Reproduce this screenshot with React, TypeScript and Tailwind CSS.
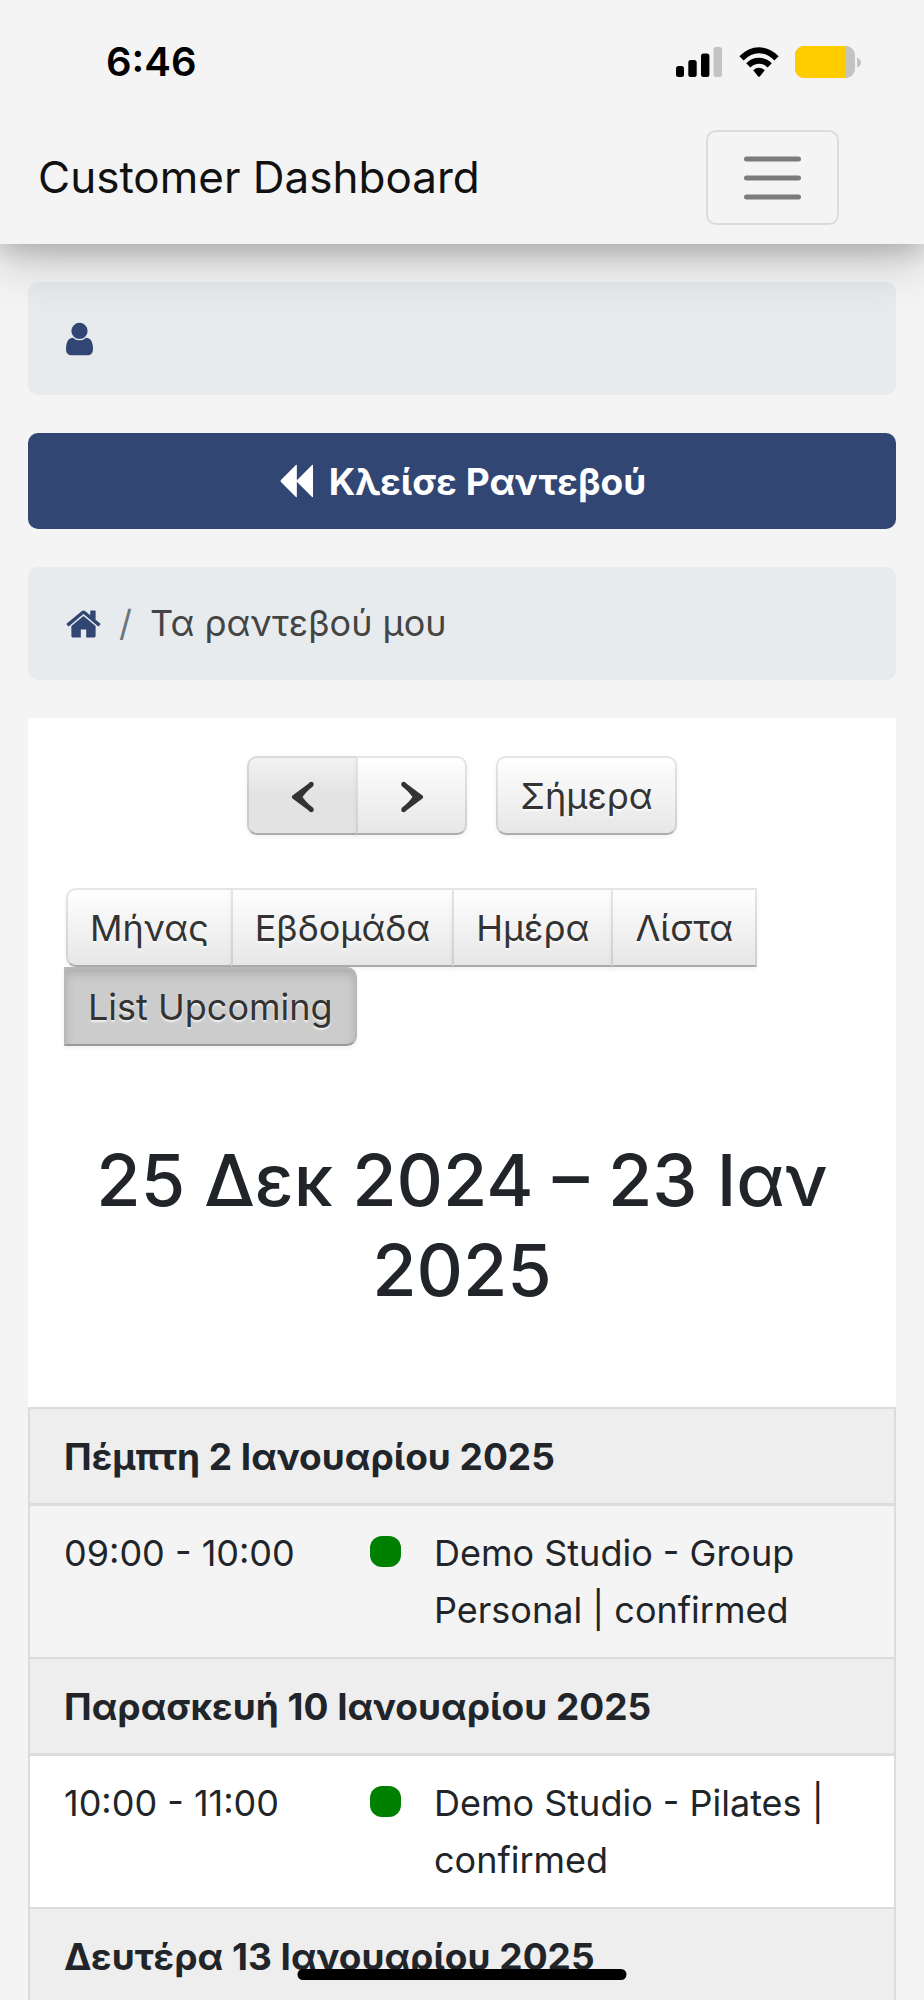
import { useState } from "react";
import clsx from "clsx";

type Appointment = { time: string; title: string };
type Day = { label: string; highlighted?: boolean; items: Appointment[] };

const VIEWS = ["Μήνας", "Εβδομάδα", "Ημέρα", "Λίστα", "List Upcoming"];

const DAYS: Day[] = [
  {
    label: "Πέμπτη 2 Ιανουαρίου 2025",
    highlighted: true,
    items: [{ time: "09:00 - 10:00", title: "Demo Studio - Group Personal | confirmed" }],
  },
  {
    label: "Παρασκευή 10 Ιανουαρίου 2025",
    items: [{ time: "10:00 - 11:00", title: "Demo Studio - Pilates | confirmed" }],
  },
  { label: "Δευτέρα 13 Ιανουαρίου 2025", items: [] },
];

const BUTTON =
  "h-[79px] border-2 border-black/10 border-b-black/25 px-[22px] pt-[2px] text-[#333] [text-shadow:0_2px_2px_rgba(255,255,255,0.75)]";
const RAISED = "bg-linear-to-b from-white to-[#e6e6e6] bg-origin-border shadow-[0_2px_5px_rgba(0,0,0,0.06)]";
const HOVERED = "bg-linear-to-b from-[#f3f3f3] to-[#e3e3e3] to-50% bg-origin-border shadow-[0_2px_5px_rgba(0,0,0,0.06)]";
const PRESSED = "bg-[#ccc] shadow-[inset_0_5px_10px_rgba(0,0,0,0.15),0_2px_5px_rgba(0,0,0,0.06)]";

function UserIcon() {
  return (
    <svg viewBox="256 0 1280 1792" className="h-[38px] w-[27px]" fill="currentColor" aria-hidden="true">
      <path d="M1536 1399q0 109-62.5 187t-150.5 78h-854q-88 0-150.5-78t-62.5-187q0-85 8.5-160.5t31.5-152 58.5-131 94-89 134.5-34.5q131 128 313 128t313-128q76 0 134.5 34.5t94 89 58.5 131 31.5 152 8.5 160.5zm-256-887q0 159-112.5 271.5t-271.5 112.5-271.5-112.5-112.5-271.5 112.5-271.5 271.5-112.5 271.5 112.5 112.5 271.5z" />
    </svg>
  );
}

function HomeIcon() {
  return (
    <svg viewBox="64 0 1664 1792" className="h-[38px] w-[35px]" fill="currentColor" aria-hidden="true">
      <path d="M1472 992v480q0 26-19 45t-45 19h-384v-384h-256v384h-384q-26 0-45-19t-19-45v-480q0-1 .5-3t.5-3l575-474 575 474q1 2 1 6zm223-69l-62 74q-8 9-21 11h-3q-13 0-21-7l-692-577-692 577q-12 8-24 7-13-2-21-11l-62-74q-8-10-7-23.5t11-21.5l719-599q32-26 76-26t76 26l244 204v-195q0-14 9-23t23-9h192q14 0 23 9t9 23v408l219 182q10 8 11 21.5t-7 23.5z" />
    </svg>
  );
}

function BackwardIcon() {
  return (
    <svg viewBox="64 0 1664 1792" className="h-[38px] w-[35px]" fill="currentColor" aria-hidden="true">
      <path d="M1683 141q19-19 32-13t13 32v1472q0 26-13 32t-32-13l-710-710q-9-9-13-19v710q0 26-13 32t-32-13l-710-710q-19-19-19-45t19-45l710-710q19-19 32-13t13 32v710q4-10 13-19z" />
    </svg>
  );
}

function Chevron({ flipped = false }: { flipped?: boolean }) {
  return (
    <svg viewBox="0 0 24 32" className={clsx("h-8 w-6", flipped && "-scale-x-100")} aria-hidden="true">
      <path
        d="M20.300 .8C22.800 .8 23.500 3.800 21.800 5.500C18 8.500 14.500 11.500 11.500 16C14.500 20.500 18 23.500 21.800 26.500C23.500 28.200 22.800 31.200 20.300 31.200C19 31.200 18 30 17 29L1.200 17.200Q.5 16 1.200 14.800L17 3C18 2 19 .8 20.300 .8Z"
        fill="#333"
      />
    </svg>
  );
}

function StatusBar() {
  return (
    <div className="flex h-[111px] items-center justify-between pt-3 pr-[63px] pl-[106px] text-black">
      <span className="text-[40px] leading-none font-semibold">6:46</span>
      <div className="flex items-center">
        <svg viewBox="0 0 46 30" className="h-[30px] w-[46px]" aria-hidden="true">
          <rect x="0" y="19" width="8" height="11" rx="2.500" />
          <rect x="12.300" y="13" width="8.400" height="17" rx="2.500" />
          <rect x="25" y="6.500" width="8.400" height="23.500" rx="2.500" />
          <rect x="37.500" y="0" width="8.500" height="30" rx="2.500" fill="#c3c3c3" />
        </svg>
        <svg viewBox="0 0 40 30" className="ml-[17px] h-[30px] w-10" aria-hidden="true">
          <g fill="none" stroke="#000" strokeWidth="6">
            <path d="M2.500 11.300Q10.500 3.200 20 3.200T37.500 11.300" />
            <path d="M9.300 18.300Q14 13.700 20 13.700T30.700 18.300" />
          </g>
          <path d="M14.200 23.200Q20 18.500 25.800 23.200L21 29.200Q20 30.300 19 29.200Z" />
        </svg>
        <svg viewBox="0 0 66 32" className="ml-4 h-8 w-[66px]" aria-hidden="true">
          <rect width="60" height="32" rx="9" fill="#c3c3c3" />
          <path d="M9 0H50.500V32H9A9 9 0 0 1 0 23V9A9 9 0 0 1 9 0Z" fill="#fc0" />
          <path d="M62 11.500Q66 13 66 16.500T62 21.500Z" fill="#c3c3c3" />
        </svg>
      </div>
    </div>
  );
}

export default function App() {
  const [view, setView] = useState("List Upcoming");

  return (
    <div className="h-screen overflow-hidden bg-[#f4f4f4] font-[Inter,'Noto_Sans',sans-serif] text-[36px] leading-[57px] text-[#212529]">
      <header className="relative z-10 bg-[#f4f4f4] shadow-[0_9px_19px_rgba(0,0,0,0.14),0_19px_48px_rgba(0,0,0,0.19)]">
        <StatusBar />
        <nav className="flex items-center justify-between py-[19px] pr-[85px] pl-[38px]">
          <a href="#" className="text-[44px] text-[#111]">
            Customer Dashboard
          </a>
          <button
            type="button"
            aria-label="Toggle navigation"
            className="flex h-[95px] w-[133px] items-center justify-center rounded-[10px] border-2 border-black/10"
          >
            <svg viewBox="0 0 57 44" className="h-11 w-[57px]" stroke="#7b7b7b" strokeWidth="5" strokeLinecap="round" aria-hidden="true">
              <path d="M2.500 3H54.500M2.500 22H54.500M2.500 41H54.500" />
            </svg>
          </button>
        </nav>
      </header>

      <main className="flex flex-col gap-[38px] px-7 pt-[38px]">
        <div className="flex h-[113px] items-center rounded-[10px] bg-[#e7ebee] px-[38px]">
          <a href="#" aria-label="Account" className="text-[#314673]">
            <UserIcon />
          </a>
        </div>

        <a
          href="#"
          className="flex h-[96px] items-center justify-center gap-4 rounded-[10px] bg-[#314673] text-[37px] font-bold text-white"
        >
          <BackwardIcon />
          Κλείσε Ραντεβού
        </a>

        <nav aria-label="breadcrumb" className="h-[113px] rounded-[10px] bg-[#e7ebee] px-[38px] py-7">
          <ol className="flex items-center">
            <li>
              <a href="#" aria-label="Home" className="text-[#314673]">
                <HomeIcon />
              </a>
            </li>
            <li className="px-[18px] text-[#6c757d]" aria-hidden="true">
              /
            </li>
            <li className="text-[#444]">Τα ραντεβού μου</li>
          </ol>
        </nav>

        <section className="bg-white">
          <div className="px-[38px] pt-[38px] pb-[92px]">
            <div className="flex justify-center gap-[29px]">
              <div className="flex">
                <button
                  type="button"
                  aria-label="Previous"
                  className={clsx(BUTTON, HOVERED, "flex w-[111px] items-center justify-center rounded-l-[10px]")}
                >
                  <Chevron />
                </button>
                <button
                  type="button"
                  aria-label="Next"
                  className={clsx(BUTTON, RAISED, "-ml-[2px] flex w-[111px] items-center justify-center rounded-r-[10px]")}
                >
                  <Chevron flipped />
                </button>
              </div>
              <button type="button" className={clsx(BUTTON, RAISED, "rounded-[10px]")}>
                Σήμερα
              </button>
            </div>

            <div className="mt-[53px] flex flex-wrap">
              {VIEWS.map((name) => (
                <button
                  key={name}
                  type="button"
                  onClick={() => setView(name)}
                  className={clsx(
                    BUTTON,
                    "-ml-[2px] first:ml-0 first:rounded-l-[10px] last:rounded-r-[10px]",
                    name === view ? PRESSED : RAISED,
                  )}
                >
                  {name}
                </button>
              ))}
            </div>

            <h2 className="mt-[89px] text-center text-[72px] leading-[90px] font-medium">
              25 Δεκ 2024 – 23 Ιαν 2025
            </h2>
          </div>

          <table className="w-full border-collapse border-2 border-[#dcdcdc]">
            {DAYS.map((day) => (
              <tbody key={day.label}>
                <tr>
                  <th
                    colSpan={3}
                    scope="colgroup"
                    className="border-y-2 border-b-3 border-[#dcdcdc] bg-[#eee] px-[34px] pt-[19px] pb-[18px] text-left text-[37px] font-bold"
                  >
                    {day.label}
                  </th>
                </tr>
                {day.items.map((item) => (
                  <tr key={item.time} className={clsx("align-top", day.highlighted && "bg-[#f4f4f4]")}>
                    <td className="w-[308px] pt-[19px] pb-[18px] pl-[34px] whitespace-nowrap">{item.time}</td>
                    <td className="w-16 pt-[19px] pb-[18px] pl-[33px]">
                      <span className="mt-[11px] block size-[31px] rounded-[12px] bg-[#008000]" />
                    </td>
                    <td className="pt-[19px] pr-[33px] pb-[18px] pl-[33px]">
                      <a href="#">{item.title}</a>
                    </td>
                  </tr>
                ))}
              </tbody>
            ))}
          </table>
        </section>
      </main>

      <div className="fixed bottom-5 left-1/2 z-20 h-[11px] w-[329px] -translate-x-1/2 rounded-full bg-black" />
    </div>
  );
}
